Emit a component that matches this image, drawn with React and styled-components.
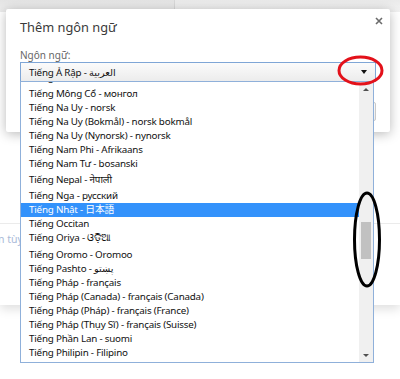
import styled, { createGlobalStyle } from "styled-components";

const GlobalStyle = createGlobalStyle`
    html, body {
        margin: 0;
        padding: 0;
        background: #ffffff;
    }
`

const FONT = `"Noto Sans", "DejaVu Sans", "Noto Sans CJK JP", sans-serif`

const languages = [
    { name: 'Tiếng Malta - Malti', h: 16 },
    { name: 'Tiếng Mông Cổ - монгол' },
    { name: 'Tiếng Na Uy - norsk' },
    { name: 'Tiếng Na Uy (Bokmål) - norsk bokmål' },
    { name: 'Tiếng Na Uy (Nynorsk) - nynorsk' },
    { name: 'Tiếng Nam Phi - Afrikaans' },
    { name: 'Tiếng Nam Tư - bosanski' },
    { name: 'Tiếng Nepal - नेपाली', h: 18, pt: 2 },
    { name: 'Tiếng Nga - русский' },
    { name: 'Tiếng Nhật - 日本語', selected: true },
    { name: 'Tiếng Occitan' },
    { name: 'Tiếng Oriya - ଓଡ଼ିଆ', h: 17, pt: 0 },
    { name: 'Tiếng Oromo - Oromoo' },
    { name: 'Tiếng Pashto - پښتو' },
    { name: 'Tiếng Pháp - français' },
    { name: 'Tiếng Pháp (Canada) - français (Canada)' },
    { name: 'Tiếng Pháp (Pháp) - français (France)' },
    { name: 'Tiếng Pháp (Thụy Sĩ) - français (Suisse)' },
    { name: 'Tiếng Phần Lan - suomi' },
    { name: 'Tiếng Philipin - Filipino' },
]

export default function App() {
    return (
        <Screen>
            <GlobalStyle />

            <Page>
                <TopBar>
                    <TopPane $left />
                    <TopPane />
                </TopBar>
                <Section>
                    <SectionBody />
                    <Hint>n tùy</Hint>
                </Section>
            </Page>

            <Dialog>
                <DialogHeader>
                    <Title>Thêm ngôn ngữ</Title>
                    <Close aria-label="close">
                        <svg width="8" height="8" viewBox="0 0 8 8">
                            <path d="M1 1 L7 7 M7 1 L1 7" stroke="#6b6b6b" strokeWidth="1.6" />
                        </svg>
                    </Close>
                </DialogHeader>
                <DialogBody>
                    <Label>Ngôn ngữ:</Label>
                    <Select>
                        <span>Tiếng Ả Rập - العربية</span>
                        <Arrow />
                    </Select>
                    <Footer>
                        <Button />
                    </Footer>
                </DialogBody>
            </Dialog>

            <Popup>
                <Rows>
                    {languages.map(lang =>
                        <Row key={lang.name} $h={lang.h} $pt={lang.pt} $selected={lang.selected}>
                            {lang.name}
                        </Row>
                    )}
                </Rows>
                <ScrollBar>
                    <ScrollButton><SmallArrow $up /></ScrollButton>
                    <Track>
                        <Thumb />
                    </Track>
                    <ScrollButton><SmallArrow /></ScrollButton>
                </ScrollBar>
            </Popup>

            <Mark $x={337} $y={55} $w={47} $h={31}>
                <svg width="47" height="31" viewBox="0 0 47 31">
                    <ellipse cx="23.5" cy="15.5" rx="21.5" ry="13.5" fill="none" stroke="#e3111a" strokeWidth="3" />
                </svg>
            </Mark>
            <Mark $x={352} $y={191} $w={30} $h={97}>
                <svg width="30" height="97" viewBox="0 0 30 97">
                    <ellipse cx="15" cy="48.5" rx="12.5" ry="46.5" fill="none" stroke="#000000" strokeWidth="3" />
                </svg>
            </Mark>
        </Screen>
    )
}

const Screen = styled.div`
    position: relative;
    width: 400px;
    height: 379px;
    overflow: hidden;
    background: #ffffff;
    font-family: ${FONT};
`

const Page = styled.div`
    display: flex;
    flex-direction: column;
`

const TopBar = styled.div`
    height: 12px;
    display: flex;
`

const TopPane = styled.div`
    width: ${({$left}) => $left ? '174px' : 'auto'};
    flex: ${({$left}) => $left ? 'none' : '1'};
    background: ${({$left}) => $left ? 'linear-gradient(#e4e4e4, #efefef)' : 'linear-gradient(#eaeaea, #f4f4f4)'};
    border-right: ${({$left}) => $left ? '1px solid #d8d8d8' : 'none'};
`

const Section = styled.div`
    height: 293px;
    background: #ffffff;
    box-shadow: 0 4px 10px rgba(0, 0, 0, 0.13);
`

const SectionBody = styled.div`
    height: 211px;
    border-bottom: 1px solid #ebebeb;
`

const Hint = styled.div`
    width: 20px;
    margin-left: -2px;
    padding-top: 8px;
    font-size: 10.5px;
    line-height: 14px;
    color: #a9bad8;
    white-space: nowrap;
`

const Dialog = styled.div`
    position: absolute;
    left: 6px;
    top: 9px;
    width: 384px;
    height: 123px;
    background: #ffffff;
    border-radius: 2px;
    box-shadow: 0 2px 12px rgba(0, 0, 0, 0.28);
`

const DialogHeader = styled.div`
    display: flex;
    justify-content: space-between;
    align-items: flex-start;
    padding: 8px 7px 0 14px;
`

const Title = styled.div`
    padding-top: 2px;
    font-size: 12.8px;
    line-height: 16px;
    color: #3a3a3a;
`

const Close = styled.div`
    width: 8px;
    height: 8px;
    display: flex;
`

const DialogBody = styled.div`
    padding: 0 14px;
`

const Label = styled.div`
    margin-top: 14px;
    font-size: 10px;
    line-height: 13px;
    color: #666666;
`

const Select = styled.div`
    box-sizing: border-box;
    height: 20px;
    display: flex;
    align-items: center;
    justify-content: space-between;
    padding: 0 6px 0 8px;
    border: 1px solid #7fa6d6;
    background: linear-gradient(#fbfbfb, #ececec);
    font-size: 9.8px;
    letter-spacing: -0.2px;
    color: #111111;
`

const Arrow = styled.div`
    width: 0;
    height: 0;
    border-left: 3.5px solid transparent;
    border-right: 3.5px solid transparent;
    border-top: 4px solid #111111;
    margin-right: 2px;
`

const Footer = styled.div`
    display: flex;
    justify-content: flex-end;
    margin-top: 20px;
`

const Button = styled.div`
    box-sizing: border-box;
    width: 60px;
    height: 19px;
    border: 1px solid #c9c9c9;
    border-radius: 2px;
    background: linear-gradient(#fafafa, #ededed);
`

const Popup = styled.div`
    position: absolute;
    left: 20px;
    top: 81px;
    box-sizing: border-box;
    width: 354px;
    height: 282px;
    border: 1px solid #8fb0da;
    background: #ffffff;
    display: flex;
    overflow: hidden;
`

const Rows = styled.div`
    flex: 1;
    overflow: hidden;

    & > :first-child {
        margin-top: -11px;
    }
`

const Row = styled.div`
    box-sizing: border-box;
    height: ${({$h}) => $h || 14}px;
    padding-top: ${({$pt}) => $pt || 0}px;
    padding-left: 8px;
    font-size: 9.8px;
    letter-spacing: -0.2px;
    line-height: 14px;
    white-space: nowrap;
    background: ${({$selected}) => $selected ? '#3392fb' : 'transparent'};
    color: ${({$selected}) => $selected ? '#ffffff' : '#111111'};
`

const ScrollBar = styled.div`
    width: 14px;
    display: flex;
    flex-direction: column;
    background: #f0f0f0;
`

const ScrollButton = styled.div`
    height: 14px;
    display: flex;
    align-items: center;
    justify-content: center;
`

const SmallArrow = styled.div`
    width: 0;
    height: 0;
    border-left: 3px solid transparent;
    border-right: 3px solid transparent;
    border-top: ${({$up}) => $up ? 'none' : '3px solid #505050'};
    border-bottom: ${({$up}) => $up ? '3px solid #505050' : 'none'};
`

const Track = styled.div`
    flex: 1;
    padding-top: 126px;
    display: flex;
    flex-direction: column;
    align-items: center;
`

const Thumb = styled.div`
    width: 10px;
    height: 37px;
    background: #c1c1c1;
`

const Mark = styled.div`
    position: absolute;
    left: ${({$x}) => $x}px;
    top: ${({$y}) => $y}px;
    width: ${({$w}) => $w}px;
    height: ${({$h}) => $h}px;
    pointer-events: none;

    svg {
        display: block;
    }
`
